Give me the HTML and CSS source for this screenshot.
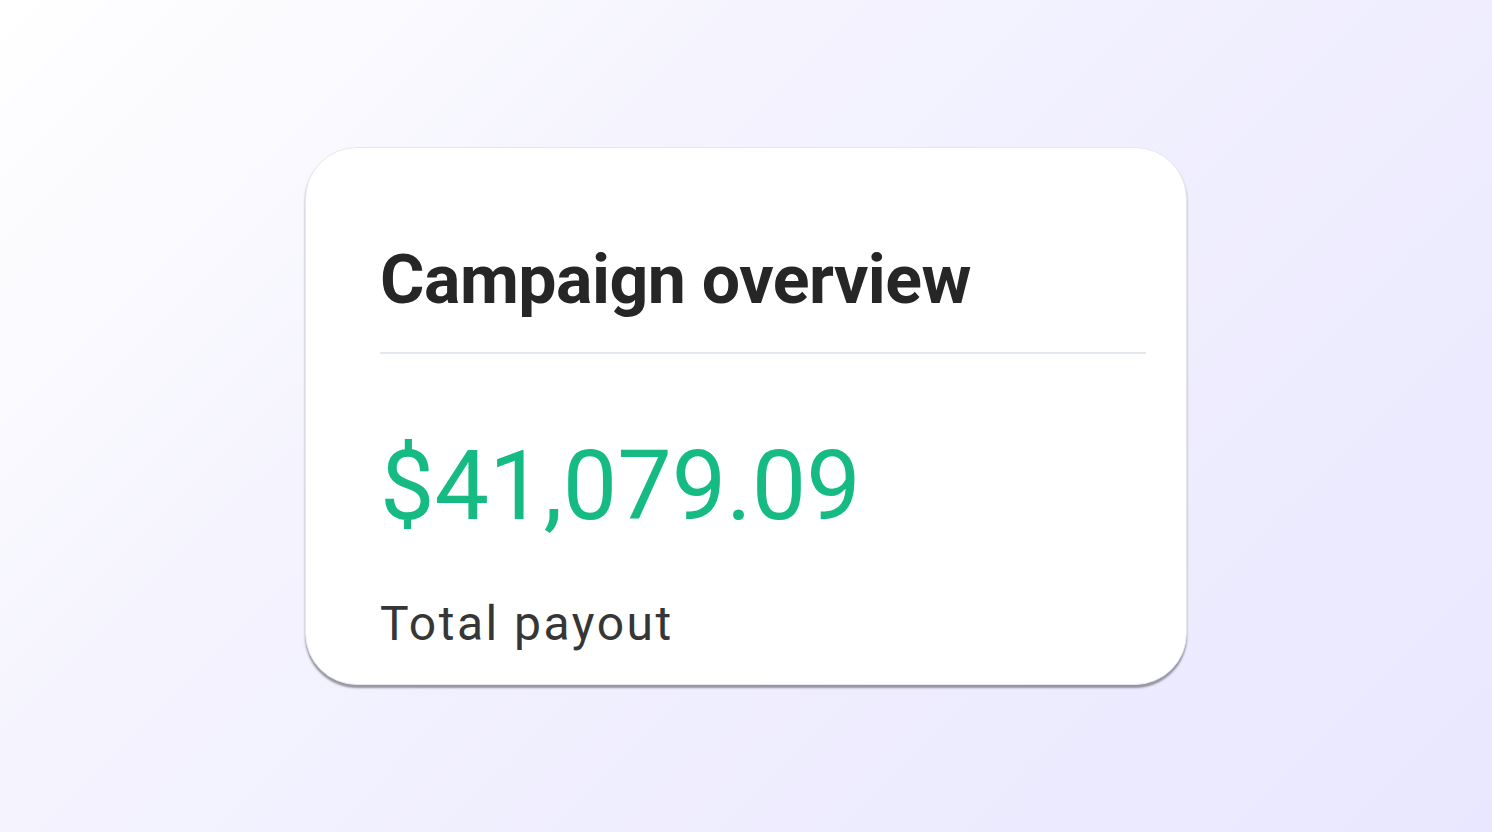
FILE: index.html
```html
<!DOCTYPE html>
<html>
<head>
<meta charset="utf-8">
<link rel="stylesheet" href="styles.css">
</head>
<body>
<main class="stage">
  <section class="card">
    <h2 class="title">Campaign overview</h2>
    <div class="divider"></div>
    <div class="amount">$41,079.09</div>
    <div class="label">Total payout</div>
  </section>
</main>
</body>
</html>
```
FILE: styles.css
```css
html, body {
  margin: 0;
  padding: 0;
  height: 100%;
}
body {
  font-family: Roboto, "Liberation Sans", sans-serif;
  background: linear-gradient(135deg, #ffffff 0%, #f3f2fe 40%, #e9e7ff 100%);
}
.stage {
  height: 832px;
  display: flex;
  align-items: center;
  justify-content: center;
}
.card {
  box-sizing: border-box;
  width: 882px;
  height: 538px;
  background: #fff;
  border-radius: 52px;
  border: 1px solid #e6e6ee;
  box-shadow: 0 3px 2px rgba(60, 60, 70, 0.5);
  padding: 92px 40px 0 74px;
  display: flex;
  flex-direction: column;
}
.title {
  margin: 0;
  font-size: 68px;
  font-weight: 700;
  color: #262626;
  letter-spacing: -0.5px;
  line-height: 80px;
}
.divider {
  height: 2px;
  background: #e3e8ee;
  margin-top: 32px;
}
.amount {
  margin-top: 82px;
  font-size: 97px;
  color: #15bb82;
  letter-spacing: 0;
  line-height: 100px;
}
.label {
  margin-top: 60px;
  font-size: 48px;
  color: #363636;
  letter-spacing: 2.5px;
  line-height: 56px;
}
```
